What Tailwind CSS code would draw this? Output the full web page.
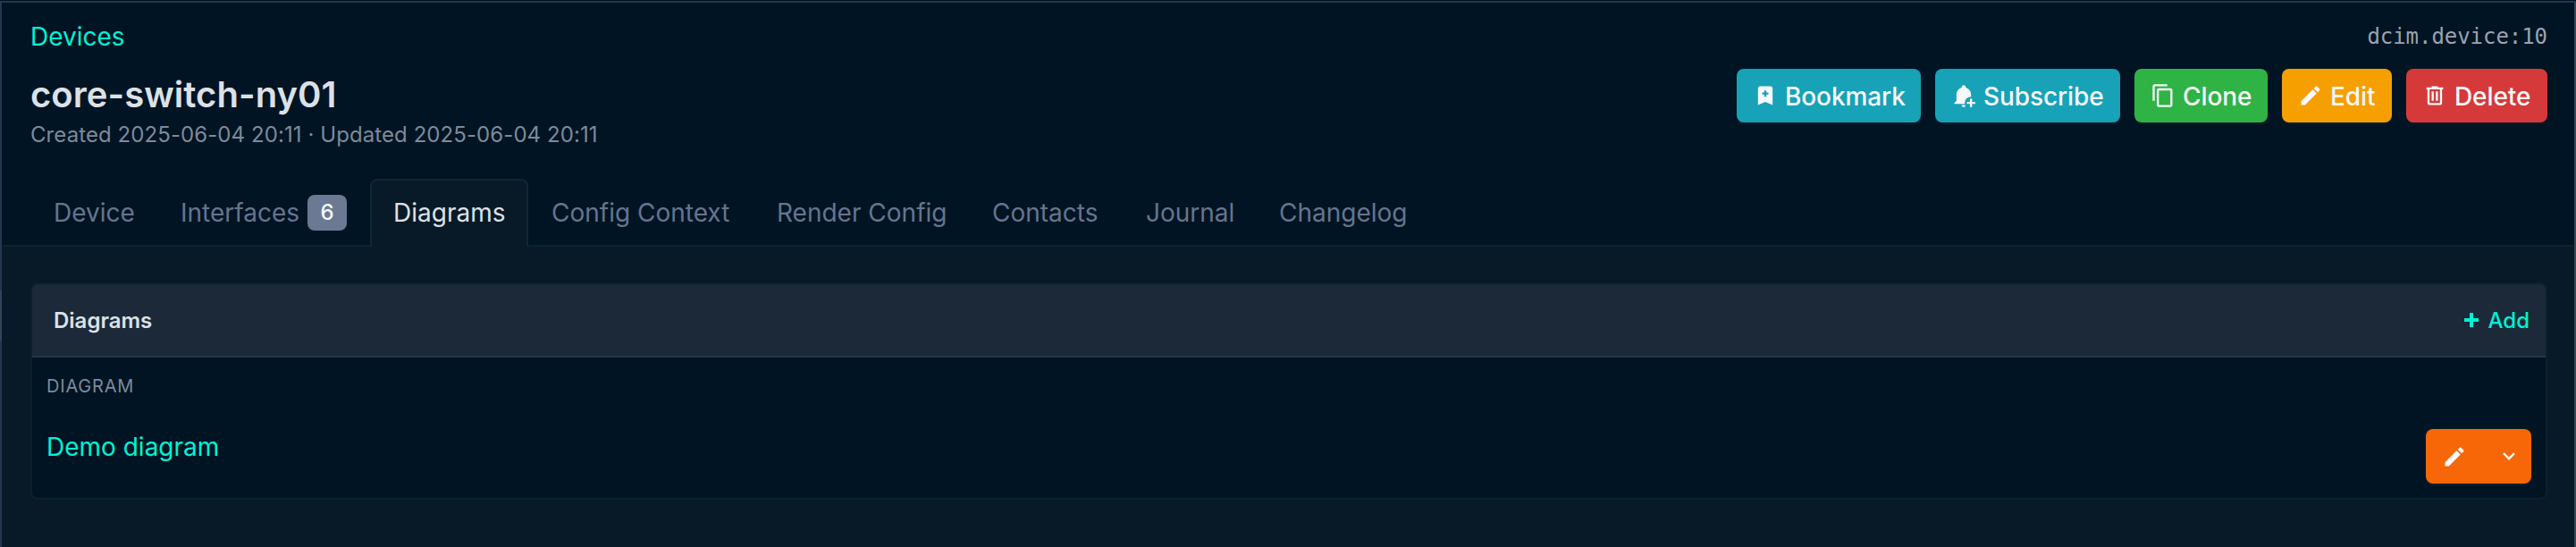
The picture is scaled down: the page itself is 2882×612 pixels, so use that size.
<!DOCTYPE html>
<html lang="en">
<head>
<meta charset="utf-8">
<title>core-switch-ny01</title>
<script src="https://cdn.jsdelivr.net/npm/@tailwindcss/browser@4"></script>
</head>
<body class="bg-[#001423] p-0 font-['Inter',sans-serif] text-[28px] leading-[40px] text-[#dce1e7]">
<div class="flex h-[612px] w-[2882px] flex-col bg-[#001423] pt-px">
  <div class="h-[2px] shrink-0 bg-[#25364f]"></div>
  <div class="flex min-h-0 flex-1">
    <div class="flex w-[2px] shrink-0 flex-col bg-[#25364f]">
      <div class="mt-[322px] h-[56px] bg-[#33445a]"></div>
    </div>
    <main class="flex min-w-0 flex-1 flex-col">
      <header class="flex h-[197px] shrink-0 justify-between pr-[30px] pl-8">
        <div class="flex flex-col">
          <a class="mt-[18px] text-[#00f2d4]">Devices</a>
          <h1 class="mt-[17px] text-[40px] leading-[56px] font-semibold tracking-[0.05px]">core-switch-ny01</h1>
          <p class="text-[24px] leading-[34px] tracking-[0.08px] text-[#7d8a9b]">Created 2025-06-04 20:11 · Updated 2025-06-04 20:11</p>
        </div>
        <div class="flex flex-col items-end">
          <code class="mt-[18px] h-10 font-['DejaVu_Sans_Mono',monospace] text-[24px] tracking-[-0.05px] text-[#9aa3af]">dcim.device:10</code>
          <div class="mt-4 flex h-[60px] gap-4 font-medium text-[#f6f8fb]">
            <button class="flex w-[206px] items-center rounded-lg bg-[#17a2b8] pl-[18px] shadow-[0_2px_2px_rgba(24,36,51,0.5)]">
              <svg class="mr-[8px] size-7" viewBox="0 0 24 24" fill="currentColor" fill-rule="evenodd"><path d="M17,3A2,2 0 0,1 19,5V21L12,18L5,21V5C5,3.89 5.9,3 7,3H17M11,7V9H9V11H11V13H13V11H15V9H13V7H11Z"/></svg><span class="pt-0.5 tracking-[-0.1px]">Bookmark</span></button>
            <button class="flex w-[207px] items-center rounded-lg bg-[#17a2b8] pl-[18px] shadow-[0_2px_2px_rgba(24,36,51,0.5)]">
              <svg class="mr-[8px] size-7" viewBox="0 0 24 24" fill="currentColor"><path d="M13 19C13 19.34 13.04 19.67 13.09 20H3V19L5 17V11C5 7.9 7.03 5.17 10 4.29V4C10 2.9 10.9 2 12 2S14 2.9 14 4V4.29C16.97 5.17 19 7.9 19 11V13C15.69 13 13 15.69 13 19M18 15V18H15V20H18V23H20V20H23V18H20V15M10 21A2 2 0 0 0 13.6 22.2L13.3 21"/></svg><span class="pt-0.5 tracking-[-0.1px]">Subscribe</span></button>
            <button class="flex w-[149px] items-center rounded-lg bg-[#2fb344] pl-[18px] shadow-[0_2px_2px_rgba(24,36,51,0.5)]">
              <svg class="mr-[8px] size-7" viewBox="0 0 24 24" fill="currentColor"><path d="M19,21H8V7H19M19,5H8A2,2 0 0,0 6,7V21A2,2 0 0,0 8,23H19A2,2 0 0,0 21,21V7A2,2 0 0,0 19,5M16,1H4A2,2 0 0,0 2,3V17H4V3H16V1Z"/></svg><span class="pt-0.5 tracking-[-0.1px]">Clone</span></button>
            <button class="flex w-[123px] items-center rounded-lg bg-[#f59f00] pl-[18px] shadow-[0_2px_2px_rgba(24,36,51,0.5)]">
              <svg class="mr-[8px] size-7" viewBox="0 0 24 24" fill="currentColor"><path d="M20.71,7.04C21.1,6.65 21.1,6 20.71,5.63L18.37,3.29C18,2.9 17.35,2.9 16.96,3.29L15.12,5.12L18.87,8.87M3,17.25V21H6.75L17.81,9.93L14.06,6.18L3,17.25Z"/></svg><span class="pt-0.5 tracking-[-0.1px]">Edit</span></button>
            <button class="flex w-[158px] items-center rounded-lg bg-[#d63939] pl-[18px] shadow-[0_2px_2px_rgba(24,36,51,0.5)]">
              <svg class="mr-[8px] size-7" viewBox="0 0 24 24" fill="currentColor"><path d="M9,3V4H4V6H5V19A2,2 0 0,0 7,21H17A2,2 0 0,0 19,19V6H20V4H15V3H9M7,6H17V19H7V6M9,8V17H11V8H9M13,8V17H15V8H13Z"/></svg><span class="pt-0.5 tracking-[-0.1px]">Delete</span></button>
          </div>
        </div>
      </header>
      <nav class="flex h-[76px] shrink-0 items-stretch border-b-2 border-[#0c2231] pl-8 text-[#67748e]">
        <a class="w-[142px] pt-[18px] pl-[26px]">Device</a>
        <a class="flex w-[238px] pt-[18px] pl-[26px]">Interfaces<span class="ml-[9px] flex h-10 w-11 items-center justify-center rounded-lg bg-[#6b7a92] text-[24px] font-medium text-[#f6f8fb]">6</span></a>
        <a class="-mb-[2px] w-[177px] rounded-t-lg border-2 border-b-0 border-[#0f2636] bg-[#081a28] pt-4 pl-6 text-[#dce1e7]">Diagrams</a>
        <a class="w-[252px] pt-[18px] pl-[26px]">Config Context</a>
        <a class="w-[241px] pt-[18px] pl-[26px]">Render Config</a>
        <a class="w-[172px] pt-[18px] pl-[26px]">Contacts</a>
        <a class="w-[149px] pt-[18px] pl-[26px]">Journal</a>
        <a class="pt-[18px] pl-[26px]">Changelog</a>
      </nav>
      <div class="flex-1 bg-[#081a28] pt-10 pr-[30px] pl-8">
        <section class="h-[243px] overflow-hidden rounded-lg border-2 border-[#0a202e] bg-[#001423]">
          <div class="flex h-[82px] items-center justify-between border-b-2 border-[#25364a] bg-[#1b2939] pr-[18px] pl-6 text-[24px]">
            <h2 class="pt-px font-semibold">Diagrams</h2>
            <a class="flex items-center font-medium text-[#00f2d4]"><svg class="mr-[7px] size-6" viewBox="0 0 24 24" fill="currentColor"><path d="M20 14H14V20H10V14H4V10H10V4H14V10H20V14Z"/></svg><span class="pt-px">Add</span></a>
          </div>
          <div class="flex justify-between pr-4 pl-4">
            <div class="flex flex-col">
              <span class="mt-3 text-[20px] tracking-[0.8px] text-[#7d8a9b]">DIAGRAM</span>
              <a class="mt-7 text-[#00f2d4]">Demo diagram</a>
            </div>
            <div class="mt-20 flex h-[61px] w-[118px] overflow-hidden rounded-lg bg-[#f76707] text-[#f6f8fb] shadow-[0_2px_2px_rgba(24,36,51,0.8)]">
              <button class="flex w-[62px] items-center pl-[18px]"><svg class="size-7" viewBox="0 0 24 24" fill="currentColor"><path d="M20.71,7.04C21.1,6.65 21.1,6 20.71,5.63L18.37,3.29C18,2.9 17.35,2.9 16.96,3.29L15.12,5.12L18.87,8.87M3,17.25V21H6.75L17.81,9.93L14.06,6.18L3,17.25Z"/></svg></button>
              <button class="flex flex-1 items-center pb-px pl-[24px]"><svg class="h-[9px] w-[14px]" viewBox="0 0 14 9" fill="none" stroke="currentColor" stroke-width="2.4"><path d="M1 1.2l6 6 6-6"/></svg></button>
            </div>
          </div>
        </section>
      </div>
    </main>
    <div class="w-[2px] shrink-0 bg-[#3c4650]"></div>
  </div>
</div>
</body>
</html>
